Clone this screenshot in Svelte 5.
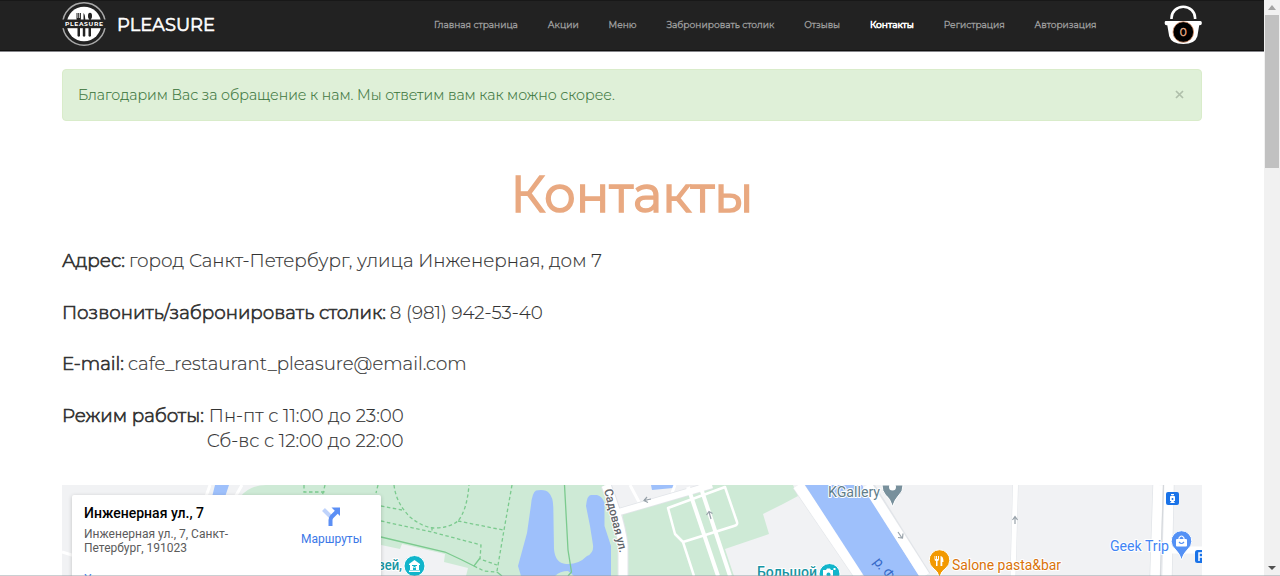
<script>
  const nav = [
    { label: 'Главная страница', width: 84 },
    { label: 'Акции', width: 31 },
    { label: 'Меню', width: 28 },
    { label: 'Забронировать столик', width: 108 },
    { label: 'Отзывы', width: 36 },
    { label: 'Контакты', width: 44, active: true },
    { label: 'Регистрация', width: 61 },
    { label: 'Авторизация', width: 62 }
  ];

  function naturalWidth(node) {
    const range = document.createRange();
    range.selectNodeContents(node);
    return range.getBoundingClientRect().width;
  }

  // Sizes a text run so that it fills the given width.
  function fit(node, width) {
    const size = parseFloat(getComputedStyle(node).fontSize);
    node.style.fontSize = `${((size * width) / naturalWidth(node)).toFixed(3)}px`;
  }

  // Tracks a text run so that it fills the given width.
  function track(node, width) {
    const spacing = (width - naturalWidth(node)) / node.textContent.length;
    node.style.letterSpacing = `${spacing.toFixed(3)}px`;
  }
</script>

<div class="screen">
  <div class="page">
    <header>
      <div class="container bar">
        <a class="brand" href="#top">
          <svg class="logo" viewBox="0 0 46 46" width="46" height="46">
            <circle cx="23" cy="23" r="21.3" fill="none" stroke="#aaa" stroke-width="1.5" />
            <circle cx="23" cy="23" r="17.3" fill="#fff" />
            <g fill="#222">
              <path d="M15.5 12h1v5h.7v-5h1v5h.7v-5h1v6q0 1.500-1.200 2v3h-2v-3q-1.200-.5-1.200-2z" />
              <path d="M22.500 12q2 1.500 1.700 9h-1.700z" />
              <ellipse cx="29" cy="15" rx="2" ry="3.200" />
              <path d="M28.200 17h1.600v5h-1.600zM16.500 26h2.500v9q-1.200 1.500-2.500 0zM21.800 26h2.500v9q-1.200 1.500-2.500 0zM27.500 26h2.500v9q-1.200 1.500-2.500 0z" />
              <rect x="0" y="18.500" width="46" height="8.700" />
            </g>
            <text x="4" y="25.200" fill="#fff" font-size="6" font-weight="700" textLength="38">PLEASURE</text>
          </svg>
          <span class="name"><span use:fit={98}>PLEASURE</span></span>
        </a>
        <nav>
          {#each nav as item}
            <a href="#top" class:active={item.active} style="width:{item.width}px"><span use:fit={item.width}>{item.label}</span></a>
          {/each}
        </nav>
        <a class="cart" href="#top" aria-label="0">
          <svg viewBox="0 0 38 40" width="38" height="40">
            <path d="M7.500 14v-1a11.800 11.300 0 0 1 23.600 0v1" fill="none" stroke="#fff" stroke-width="2.600" />
            <path d="M1.500 16h35q1.300 0 1.300 1.500v1q0 1.700-2 1.700h-.6l-1.800 11Q31 39 19.300 39T5.200 31.200l-1.900-11H2.500q-1.800 0-1.800-1.700v-1Q.7 16 1.500 16z" fill="#fff" />
            <circle cx="19.300" cy="27" r="10.300" fill="#000" stroke="#d78b62" stroke-width=".8" />
            <text x="19.300" y="30.700" text-anchor="middle" font-size="10.500" fill="#f0b994" stroke="#e9a981" stroke-width=".4">0</text>
          </svg>
        </a>
      </div>
    </header>

    <main class="container">
      <div class="alert">
        <span use:fit={537}>Благодарим Вас за обращение к нам. Мы ответим вам как можно скорее.</span>
        <button aria-label="×"><svg width="9" height="9" viewBox="0 0 9 9"><path d="M1 1l7 7M8 1L1 8" stroke="#afbfaa" stroke-width="1.700" /></svg></button>
      </div>

      <h1><span use:fit={243}>Контакты</span></h1>

      <p><b use:fit={63}>Адрес:</b><span class="gap" use:fit={473}>город Санкт-Петербург, улица Инженерная, дом 7</span></p>
      <p><b use:fit={324}>Позвонить/забронировать столик:</b><span class="gap" use:fit={153}>8 (981) 942-53-40</span></p>
      <p><b use:fit={62}>E-mail:</b><span class="gap" use:fit={339}>cafe_restaurant_pleasure@email.com</span></p>
      <div class="hours">
        <b><span use:fit={142}>Режим работы:</span></b>
        <div><span use:fit={195}>Пн-пт с 11:00 до 23:00</span><br /><span class="weekend" use:fit={197}>Сб-вс с 12:00 до 22:00</span></div>
      </div>

      <section class="map">
        <svg class="canvas" viewBox="62 485 1140 91" width="1140" height="91">
          <rect x="62" y="485" width="1140" height="91" fill="#f1f2f4" />
          <path d="M240 497Q250 485 266 485H604L630 576H466L468 568L444 562L445 554L402 544L400 549L240 515z" fill="#ceead6" />
          <path d="M622 511L705 485H793L798 496L783 504L763 514L769 534L725 549L734 576H628z" fill="#ceead6" />
          <path d="M215 485h14l-4 12h-13zM651 485h24l-2 3-21 2z" fill="#9ec0fb" />
          <path d="M210 485l-7 20M242 485l-8 14M62 552l16 5M630 485l9 17M675 485l-3 8" stroke="#fff" stroke-width="3" fill="none" />
          <path d="M536 490.500Q546 489 549 493Q553 497 553.300 507L554 549Q555 563 566 564Q578 565 587 556Q594 553 593 545L590 526L586 506Q587 495 591 495H597Q602 496 604.500 503V526L611 546V576H574L568 571Q560 571 555 576H521L518 566L527 533L531 505Q532 493 536 490.500z" fill="#9ec0fb" />
          <g fill="none" stroke="#7bca8e" stroke-width="1.300">
            <path d="M381 537L445 552L462 560L474 566L480 558M497 572L502 576" />
            <path d="M564.500 485L568 550L571.500 572L568 576" />
            <g stroke-dasharray="3.500 2.500">
              <path d="M304 485v7h20v6M325 485l-3 12M378 485l-2 8" />
              <path d="M394 485Q396 503 410 517Q422 527 434 528Q449 528 458 521Q467 510 469 485" />
              <path d="M381 506L402 510M381 521L432 532L481 545L480 559L497 565M432 527V532M458 521L503 530M512 485L504 530L497 571M474 566L484 571L497 572" />
            </g>
          </g>
          <g fill="none" stroke="#e2e5e9" stroke-width="12">
            <path d="M606 485Q620 520 623 545V576" stroke-width="11" />
            <path d="M619 512L712 485" stroke-width="8" />
            <path d="M798 485L860 576" />
            <path d="M868 485L925 576" />
            <path d="M1015.500 485L1013 576" stroke-width="6" />
            <path d="M1158 485L1155 576M1169 485L1167 576" stroke-width="11" />
          </g>
          <g fill="none" stroke="#fff">
            <path d="M606 485Q620 520 623 545V576" stroke-width="9" />
            <path d="M619 512L712 485" stroke-width="6.500" />
            <path d="M688 487L718 576M700 485L730 576" stroke-width="4" />
            <path d="M668 508L725 487L737 522Q738 525 734 526L683 542L675 534zM683 542L694 576" stroke-width="2.500" stroke-linejoin="round" />
            <path d="M798 485L860 576" stroke-width="11" />
          </g>
          <path d="M805 485H862L919 576H864z" fill="#9ec0fb" />
          <g fill="none" stroke="#fff">
            <path d="M867 485L925 576" stroke-width="10" />
            <path d="M1015.500 485L1013 576" stroke-width="5" />
            <path d="M1158 485L1155 576M1169 485L1167 576" stroke-width="9.500" />
            <path d="M1168 550H1202" stroke-width="7" />
          </g>
          <path d="M1163.500 485L1160.500 576" stroke="#d5d8dc" stroke-width="1" />
          <g fill="none" stroke="#98a2aa" stroke-width="1.200">
            <path d="M651 499l-7 1.500M647 497l-3 3.500 4 2M711 519l-2-7M706.500 515l2.500-3.500 3.500 2M898 532l4 6M898 537.500l4.500.5.500-4.500M1015 524v-7.500M1012.500 520l2.500-3.500 2.500 3.500" />
          </g>

          <g class="label">
            <text x="0" y="0" transform="translate(604 490) rotate(76)" fill="#5f6368" font-size="12" font-weight="500" textLength="65" lengthAdjust="spacingAndGlyphs">Садовая ул.</text>
            <text x="828" y="497" fill="#607d8b" font-size="14" textLength="52" lengthAdjust="spacingAndGlyphs">KGallery</text>
            <text x="952" y="570" fill="#d9730a" font-size="14" textLength="109" lengthAdjust="spacingAndGlyphs">Salone pasta&amp;bar</text>
            <text x="1110" y="551" fill="#4285f4" font-size="14" textLength="59" lengthAdjust="spacingAndGlyphs">Geek Trip</text>
            <text x="757" y="577" fill="#1795a3" font-size="14" font-weight="500" textLength="60" lengthAdjust="spacingAndGlyphs">Большой</text>
            <text x="378" y="569.500" fill="#1795a3" font-size="14" font-weight="500" textLength="24" lengthAdjust="spacingAndGlyphs">зей,</text>
          </g>
          <text transform="translate(873 562) rotate(52)" fill="#3569c8" font-size="14" textLength="32">р. Фо</text>

          <g stroke="#fff" stroke-width="1">
            <circle cx="414.500" cy="566" r="10.500" fill="#12b5cb" />
            <circle cx="829.500" cy="574" r="10.500" fill="#12b5cb" />
            <path d="M892.500 506.500Q890 498 885.500 495Q882 491 882 485H903Q903 492 899 495Q895 499 892.500 506.500z" fill="#78909c" />
            <path d="M939.500 578Q938 571 933 568A10.300 10.300 0 1 1 946 568Q941 571 939.500 578z" fill="#f29900" />
            <path d="M1181.500 560Q1180 554 1175 549A10.300 10.300 0 1 1 1188 549Q1183 554 1181.500 560z" fill="#5491f5" />
          </g>
          <circle cx="892.500" cy="487" r="3.500" fill="#fff" />
          <path d="M409 564l5.500-4 5.500 4v1h-11zM410 565h2v5h-2zM417 565h2v5h-2zM409 570.500h11v1.500h-11z" fill="#fff" />
          <path d="M412.500 570v-4l2 2 2-2v4" fill="none" stroke="#fff" stroke-width="1" />
          <path d="M823 570h3l1-1.500h3l1 1.500h2v7h-10zM833.500 568h2v2h-2z" fill="#fff" />
          <circle cx="828.500" cy="574.500" r="2" fill="#12b5cb" />
          <path d="M934.500 556v3q0 2 1.500 2v5h1.500v-5q1.500 0 1.500-2v-3h-1v3h-1v-3h-1v3h-.7v-3zM940.500 566v-10q3 0 3 6h-1.200v4z" fill="#fff" />
          <rect x="1176" y="539" width="11" height="7.500" rx="1" fill="#fff" />
          <path d="M1179 540v-2q2.500-4 5 0v2" fill="none" stroke="#fff" stroke-width="1.200" />
          <path d="M1179 542q2.500 3 5 0" fill="none" stroke="#5491f5" stroke-width="1.200" />
          <rect x="1166" y="492" width="13" height="13" rx="2" fill="#1a73e8" />
          <path d="M1170 496.500q2.500-2 5 0v4.500h-5zM1171 494h3v1h-3zM1170 503l1.500-2h2l1.500 2z" fill="#fff" />
          <circle cx="1172.500" cy="499" r="1" fill="#1a73e8" />
          <rect x="1195" y="550" width="13" height="13" rx="2.500" fill="#1a73e8" />
          <path d="M1199 561v-8h5M1199 557h5" fill="none" stroke="#fff" stroke-width="1.500" />
        </svg>

        <div class="place">
          <div class="info">
            <strong><span use:track={120}>Инженерная ул., 7</span></strong>
            <span class="address"><span use:track={144}>Инженерная ул., 7, Санкт-</span><br /><span use:track={103}>Петербург, 191023</span></span>
            <a class="more" href="#top">Увеличить карту</a>
          </div>
          <a class="directions" href="#top">
            <svg width="18" height="20" viewBox="0 0 18 20">
              <path d="M1.500 2.500L9 10" stroke="#bfd3fb" stroke-width="4" />
              <path d="M8.500 19v-6q0-2 1.500-3.500L15 4.500" stroke="#5c8ff5" stroke-width="4" fill="none" />
              <path d="M9.500.5H18V9z" fill="#5c8ff5" />
            </svg>
            <span use:track={61}>Маршруты</span>
          </a>
        </div>
      </section>
    </main>
  </div>

  <div class="scrollbar">
    <i class="up"></i>
    <div class="thumb"></div>
    <i class="down"></i>
  </div>
  <div class="edge"></div>
</div>

<style>
  :global(body) { margin: 0; overflow: hidden; }
  .screen { position: relative; display: flex; width: 1280px; height: 576px; overflow: hidden; background: #fff; font-family: Montserrat, Inter, "Noto Sans", sans-serif; color: #333; }
  .page { width: 1264px; height: 576px; overflow: hidden; }
  a { color: inherit; text-decoration: none; }
  span, b, strong { white-space: nowrap; }
  header { height: 52px; box-sizing: border-box; background: #222; border-top: 1px solid #181818; border-bottom: 1px solid #85858a; box-shadow: inset 0 -1px #101010; }
  .container { width: 1140px; margin: 0 auto; }
  .bar { display: flex; height: 50px; }
  .brand { display: flex; width: 372px; }
  .logo { flex: none; margin-left: -1px; }
  .name { margin: 9px 0 0 10px; font-size: 17.500px; line-height: 30px; font-weight: 400; color: #fff; -webkit-text-stroke: .6px #fff; }
  nav { display: flex; gap: 29.800px; padding-top: 14px; font-size: 9.300px; line-height: 20px; color: #a0a0a0; font-weight: 400; -webkit-text-stroke: .3px #a0a0a0; }
  nav a { flex: none; }
  nav .active { color: #fff; -webkit-text-stroke: .6px #fff; }
  .cart { margin: 4px 0 0 auto; height: 40px; }
  .alert { display: flex; justify-content: space-between; align-items: center; box-sizing: border-box; height: 52px; margin-top: 17px; padding: 0 17px 0 15px; border: 1px solid #d9ecca; border-radius: 4px; background: #dff0d8; color: #3c763d; font-size: 14.300px; font-weight: 300; -webkit-text-stroke: .15px #3c763d; }
  button { display: flex; margin-top: -1px; padding: 0; border: 0; background: none; }
  h1 { height: 70px; margin: 38px 0 19.300px; text-align: center; font-size: 51px; line-height: 70px; font-weight: 400; color: #e9a981; -webkit-text-stroke: 1.600px #e9a981; }
  p, .hours { height: 25.700px; margin: 0 0 25.800px; font-size: 17.500px; line-height: 25.700px; font-weight: 300; -webkit-text-stroke: .15px #333; }
  b { font-weight: 300; -webkit-text-stroke: .7px #333; }
  .gap { margin-left: 4px; }
  .hours { display: flex; gap: 5px; height: 51px; margin-bottom: 31.200px; }
  .weekend { margin-left: -2px; }
  .map { position: relative; height: 91px; overflow: hidden; font-family: Roboto, sans-serif; }
  .canvas { display: block; }
  .label text { paint-order: stroke; stroke: #fff; stroke-width: 2px; stroke-linejoin: round; }
  .place { position: absolute; left: 10px; top: 10px; display: flex; justify-content: space-between; box-sizing: border-box; width: 309px; height: 96px; padding: 9px 19px 0 12px; border-radius: 2px; background: #fff; box-shadow: 0 1px 4px rgba(0, 0, 0, .2); }
  .info { display: flex; flex-direction: column; }
  strong { font-size: 14px; line-height: 18px; font-weight: 500; color: #000; }
  .address { margin-top: 5px; font-size: 12px; line-height: 14.500px; color: #5b5b5b; }
  .more { margin-top: 16px; font-size: 12px; line-height: 14px; color: #427fed; }
  .directions { display: flex; flex-direction: column; align-items: center; gap: 5px; padding-top: 3px; font-size: 12px; line-height: 14px; color: #3b78e7; }
  .scrollbar { display: flex; flex-direction: column; align-items: center; width: 16px; height: 576px; background: #f1f1f1; }
  .thumb { width: 14px; height: 153px; margin-top: 5px; background: #c1c1c1; }
  .up { margin-top: 5px; border: 4px solid transparent; border-top: 0; border-bottom: 5px solid #a3a3a3; }
  .down { margin: auto 0 6px; border: 4px solid transparent; border-bottom: 0; border-top: 4px solid #505050; }
  .edge { position: absolute; left: 0; right: 0; bottom: 0; height: 1px; background: rgba(150, 160, 165, .5); }
</style>
